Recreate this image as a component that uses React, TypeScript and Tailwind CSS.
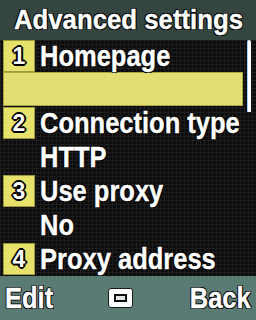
import React from "react";

const outline =
  "[text-shadow:1px_1px_0_#000,-1px_-1px_0_#000,1px_-1px_0_#000,-1px_1px_0_#000,0_1px_0_#000,0_-1px_0_#000,1px_0_0_#000,-1px_0_0_#000]";

function Label({ children }: { children: React.ReactNode }) {
  return (
    <span
      className={`inline-block origin-left [transform:scaleX(0.85)] whitespace-nowrap text-[30px] leading-[34px] font-bold text-white [-webkit-text-stroke:0.4px_#fff] ${outline}`}
    >
      {children}
    </span>
  );
}

function Badge({ n }: { n: number }) {
  return (
    <div className="w-[32px] h-[32px] shrink-0 bg-[#e6e26c] border border-[#9c9a3a] flex items-center justify-center">
      <span
        className={`text-[23px] leading-none font-bold text-white [text-shadow:2px_0_0_#000,-2px_0_0_#000,0_2px_0_#000,0_-2px_0_#000,1px_1px_0_#000,-1px_-1px_0_#000,1px_-1px_0_#000,-1px_1px_0_#000]`}
      >
        {n}
      </span>
    </div>
  );
}

function Row({ n, label, h = "h-[34px]" }: { n?: number; label: string; h?: string }) {
  return (
    <div className={`${h} flex items-center pl-[3px]`}>
      {n !== undefined ? <Badge n={n} /> : <div className="w-[32px] shrink-0" />}
      <div className="ml-[5px]">
        <Label>{label}</Label>
      </div>
    </div>
  );
}

export default function App() {
  return (
    <div className="w-[256px] h-[320px] overflow-hidden flex flex-col font-['Liberation_Sans',Arial,sans-serif] select-none">
      <div className="h-[40px] shrink-0 bg-[#34463f] flex items-center justify-center">
        <span
          className={`inline-block [transform:scaleX(0.92)] whitespace-nowrap text-[28px] leading-[40px] font-bold text-white [-webkit-text-stroke:0.4px_#fff] ${outline}`}
        >
          Advanced settings
        </span>
      </div>
      <div className="relative flex-1 bg-[#0c0c0c] bg-[linear-gradient(#1d1d1d_1px,transparent_1px),linear-gradient(90deg,#1d1d1d_1px,transparent_1px)] bg-[length:4px_4px]">
        <Row n={1} label="Homepage" h="h-[32px]" />
        <div className="h-[34px] pl-[3px] pr-[13px]">
          <div className="h-full bg-[#e2de72] border border-[#a9a642]" />
        </div>
        <Row n={2} label="Connection type" />
        <Row label="HTTP" />
        <Row n={3} label="Use proxy" />
        <Row label="No" />
        <Row n={4} label="Proxy address" />
        <div className="absolute left-[247px] top-0 w-[4px] h-[72px] bg-white rounded-t-[2px] border-l border-[#9fd3ff]" />
      </div>
      <div className="h-[44px] shrink-0 bg-[#5a7b73] flex items-center justify-between px-[5px]">
        <span
          className={`inline-block origin-left [transform:scaleX(0.85)] text-[30px] leading-[44px] font-bold text-white [-webkit-text-stroke:0.4px_#fff] ${outline}`}
        >
          Edit
        </span>
        <div className="w-[25px] h-[20px] bg-white rounded-[3px] border border-[#1a1a1a] flex items-center justify-center">
          <div className="w-[13px] h-[8px] border-2 border-[#111] bg-[#dfe8e4]" />
        </div>
        <span
          className={`inline-block origin-right [transform:scaleX(0.85)] text-[30px] leading-[44px] font-bold text-white [-webkit-text-stroke:0.4px_#fff] ${outline}`}
        >
          Back
        </span>
      </div>
    </div>
  );
}
